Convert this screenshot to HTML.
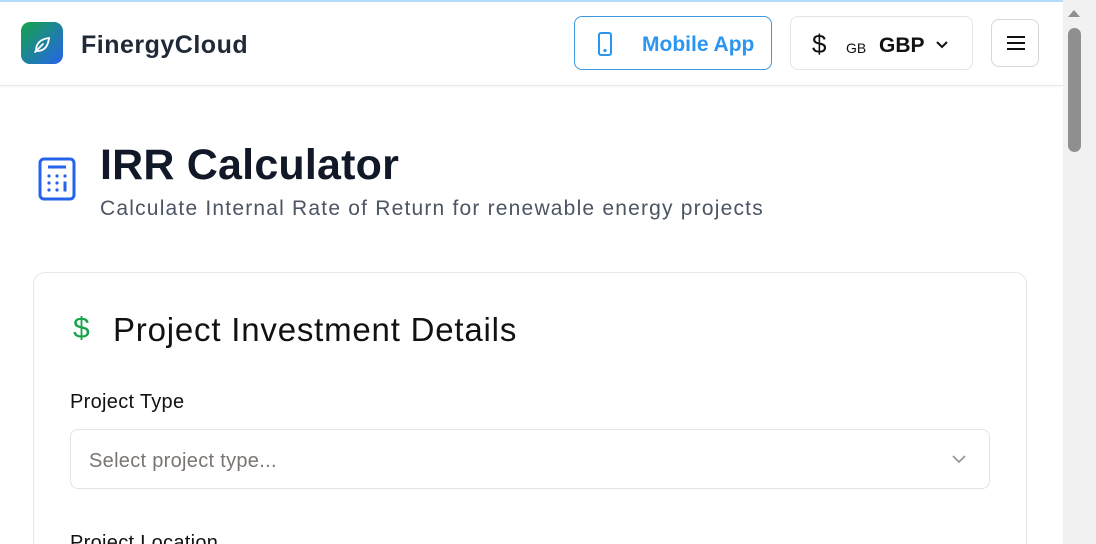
<!DOCTYPE html>
<html><head><meta charset="utf-8"><style>
*{box-sizing:border-box;margin:0;padding:0}
html,body{width:1096px;height:544px;overflow:hidden}
body{background:#fff;font-family:"Liberation Sans",sans-serif;position:relative}
#w{position:absolute;left:0;top:0;width:1096px;height:544px;overflow:hidden}
.top{position:absolute;left:0;top:0;width:1063px;height:2px;background:#b3dbfb}
.hdr{position:absolute;left:0;top:2px;width:1063px;height:84px;border-bottom:1px solid #e8e8e8;box-shadow:0 1px 2px rgba(0,0,0,.04)}
.logo{position:absolute;left:21px;top:20px;width:42px;height:42px;border-radius:9px;background:linear-gradient(135deg,#16a34a,#2563eb)}
.brand{position:absolute;left:81px;top:29px;font-size:25px;font-weight:bold;color:#1f2937;letter-spacing:.5px}
.btn{position:absolute;border-radius:8px;background:#fff}
.mob{left:574px;top:14px;width:198px;height:54px;border:1px solid #3b9ae1}
.mob span{position:absolute;left:67px;top:16px;font-size:21px;font-weight:bold;color:#2b95ef}
.cur{left:790px;top:14px;width:183px;height:54px;border:1px solid #e3e4e8}
.ham{left:991px;top:17px;width:48px;height:48px;border:1px solid #d5d7dc}
.sb{position:absolute;left:1063px;top:0;width:33px;height:544px;background:#f1f1f1}
.thumb{position:absolute;left:1068px;top:28px;width:13px;height:124px;border-radius:7px;background:#8f8f8f}
h1{position:absolute;left:100px;top:141px;font-size:43px;font-weight:bold;color:#111827;letter-spacing:.2px}
.sub{position:absolute;left:100px;top:197px;font-size:21px;color:#4b5563;letter-spacing:1.2px}
.card{position:absolute;left:33px;top:272px;width:994px;height:300px;border:1px solid #e5e7eb;border-radius:12px}
.h2{position:absolute;left:113px;top:311px;font-size:33px;color:#111;font-weight:500;letter-spacing:.8px}
.lbl{position:absolute;left:70px;font-size:20px;color:#111;letter-spacing:.3px}
.sel{position:absolute;left:70px;top:429px;width:920px;height:60px;border:1px solid #e2e3e6;border-radius:8px}
.sel span{position:absolute;left:18px;top:20px;font-size:20px;color:#7a7572;letter-spacing:.3px}
</style></head><body><div id="w">
<div class="top"></div>
<div class="hdr">
<div class="logo"><svg width="42" height="42" viewBox="0 0 42 42" fill="none" stroke="#fff" stroke-width="1.8" stroke-linecap="round"><path d="M15 29c0-8 5-12 13-13-1 9-5 13-12 13z"/><path d="M14 30l8-8"/></svg></div>
<div class="brand">FinergyCloud</div>
<div class="btn mob"><svg style="position:absolute;left:22px;top:15px" width="16" height="24" viewBox="0 0 16 24" fill="none" stroke="#2b95ef" stroke-width="2"><rect x="2" y="1" width="12" height="22" rx="2"/><circle cx="8" cy="18.5" r=".6" fill="#2b95ef"/></svg><span>Mobile App</span></div>
<div class="btn cur"><span style="position:absolute;left:21px;top:12px;font-size:26px;color:#111">$</span><span style="position:absolute;left:55px;top:23px;font-size:14px;color:#111">GB</span><span style="position:absolute;left:88px;top:17px;font-size:21px;font-weight:bold;color:#111">GBP</span><svg style="position:absolute;left:144px;top:23px" width="14" height="10" viewBox="0 0 14 10" fill="none" stroke="#111" stroke-width="2"><path d="M2 2l5 5 5-5"/></svg></div>
<div class="btn ham"><svg style="position:absolute;left:14px;top:15px" width="20" height="16" viewBox="0 0 20 16" stroke="#111" stroke-width="2"><path d="M1 2h18M1 8h18M1 14h18"/></svg></div>
</div>
<div class="sb"><svg style="position:absolute;left:4px;top:8px" width="14" height="10"><path d="M1 9L7 2l6 7z" fill="#8f8f8f"/></svg></div>
<div class="thumb"></div>
<svg style="position:absolute;left:38px;top:157px" width="38" height="44" viewBox="0 0 38 44" fill="none" stroke="#2563eb" stroke-width="3"><rect x="2" y="2" width="34" height="40" rx="4"/><path d="M10 10h18" stroke-width="3"/><g fill="#2563eb" stroke="none"><circle cx="11" cy="19" r="1.6"/><circle cx="19" cy="19" r="1.6"/><circle cx="27" cy="19" r="1.6"/><circle cx="11" cy="26" r="1.6"/><circle cx="19" cy="26" r="1.6"/><circle cx="11" cy="33" r="1.6"/><circle cx="19" cy="33" r="1.6"/><rect x="25.5" y="24.5" width="3" height="10"/></g></svg>
<h1>IRR Calculator</h1>
<div class="sub">Calculate Internal Rate of Return for renewable energy projects</div>
<div class="card"></div>
<div style="position:absolute;left:73px;top:312px;font-size:30px;color:#16a34a">$</div>
<div class="h2">Project Investment Details</div>
<div class="lbl" style="top:391px">Project Type</div>
<div class="sel"><span>Select project type...</span><svg style="position:absolute;left:880px;top:24px" width="16" height="10" viewBox="0 0 16 10" fill="none" stroke="#999" stroke-width="1.8"><path d="M2 2l6 6 6-6"/></svg></div>
<div class="lbl" style="top:532px">Project Location</div>
</div></body></html>
